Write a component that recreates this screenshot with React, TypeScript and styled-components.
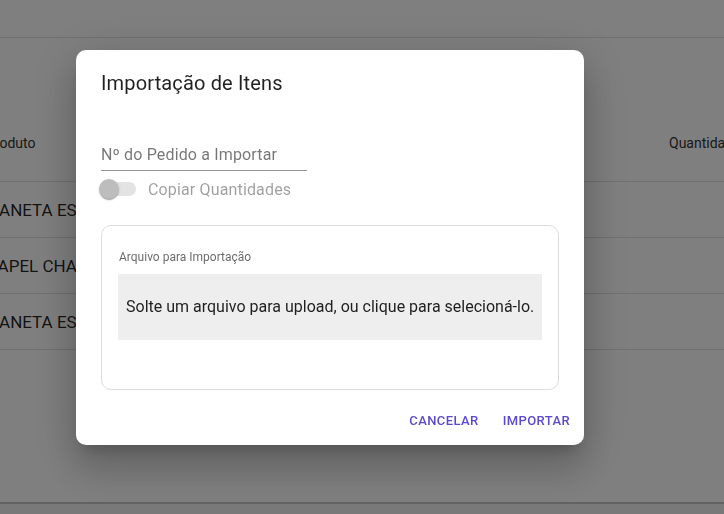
import * as React from 'react'
import styled, { createGlobalStyle } from 'styled-components'

const GlobalStyle = createGlobalStyle`
  html, body {
    margin: 0;
    padding: 0;
    width: 724px;
    height: 514px;
    overflow: hidden;
    background: #fff;
    font-family: Roboto, "Liberation Sans", Arial, sans-serif;
  }
`

const Page = styled.div`
  display: flex;
  flex-direction: column;
  width: 724px;
  height: 514px;
  background: #fff;
  overflow: hidden;
`
const TopBar = styled.div`
  height: 37px;
  flex-shrink: 0;
  border-bottom: 1px solid #e0e0e0;
`
const Table = styled.div`
  display: flex;
  flex-direction: column;
  margin-left: -14px;
  flex: 1;
`
const HeaderRow = styled.div`
  display: flex;
  align-items: flex-end;
  height: 144px;
  padding-bottom: 30px;
  box-sizing: border-box;
  border-bottom: 1px solid #e0e0e0;
  font-size: 14px;
  color: #333;
`
const BodyRow = styled.div`
  display: flex;
  align-items: center;
  height: 56px;
  box-sizing: border-box;
  border-bottom: 1px solid #e0e0e0;
  padding-left: 2px;
  font-size: 17px;
  color: rgba(0, 0, 0, 0.87);
`
const Cell = styled.div<{ $width?: number }>`
  width: ${p => (p.$width ? `${p.$width}px` : 'auto')};
  white-space: nowrap;
  flex-shrink: 0;
`
const Footer = styled.div`
  height: 10px;
  flex-shrink: 0;
  border-top: 2px solid #c4c4c4;
  background: #f2f2f2;
`

const Overlay = styled.div`
  position: fixed;
  inset: 0;
  background: rgba(0, 0, 0, 0.5);
  display: flex;
  align-items: flex-start;
  justify-content: flex-start;
  padding: 50px 0 0 76px;
`
const Dialog = styled.div`
  width: 508px;
  background: #fff;
  border-radius: 10px;
  box-shadow: 0px 11px 15px -7px rgba(0, 0, 0, 0.2), 0px 24px 38px 3px rgba(0, 0, 0, 0.14),
    0px 9px 46px 8px rgba(0, 0, 0, 0.12);
  display: flex;
  flex-direction: column;
`
const Title = styled.h2`
  margin: 0;
  padding: 17px 24px 15px 25px;
  font-size: 20px;
  font-weight: 400;
  line-height: 32px;
  letter-spacing: 0.15px;
  color: rgba(0, 0, 0, 0.87);
`
const Content = styled.div`
  padding: 9px 24px 0 24px;
  display: flex;
  flex-direction: column;
`
const Field = styled.label`
  display: flex;
  align-items: flex-end;
  width: 206px;
  height: 48px;
  margin-left: 1px;
  padding-bottom: 4px;
  box-sizing: border-box;
  border-bottom: 1px solid rgba(0, 0, 0, 0.42);
  font-size: 16px;
  letter-spacing: 0.15px;
  color: rgba(0, 0, 0, 0.54);
  line-height: 23px;
`
const SwitchRow = styled.div`
  display: flex;
  align-items: center;
  height: 38px;
  margin-left: -10px;
  margin-top: -1px;
  font-size: 16px;
  letter-spacing: 0.15px;
  color: rgba(0, 0, 0, 0.38);
`
const SwitchRoot = styled.span`
  position: relative;
  width: 58px;
  height: 38px;
  padding: 12px;
  box-sizing: border-box;
  display: inline-flex;
  flex-shrink: 0;
`
const Track = styled.span`
  width: 100%;
  height: 100%;
  border-radius: 7px;
  background: #e3e3e3;
`
const Thumb = styled.span`
  position: absolute;
  top: 9px;
  left: 9px;
  width: 20px;
  height: 20px;
  border-radius: 50%;
  background: #bdbdbd;
  box-shadow: 0px 2px 1px -1px rgba(0, 0, 0, 0.2), 0px 1px 1px 0px rgba(0, 0, 0, 0.14),
    0px 1px 3px 0px rgba(0, 0, 0, 0.12);
`
const DropBox = styled.div`
  margin-top: 17px;
  margin-left: 1px;
  width: 458px;
  border: 1px solid #dcdcdc;
  border-radius: 10px;
  box-sizing: border-box;
  padding: 24px 16px 49px 16px;
  display: flex;
  flex-direction: column;
`
const DropLabel = styled.div`
  font-size: 12px;
  line-height: 14px;
  color: rgba(0, 0, 0, 0.6);
  margin-bottom: 10px;
  padding-left: 1px;
`
const DropArea = styled.div`
  height: 66px;
  background: #eeeeee;
  display: flex;
  align-items: center;
  padding-left: 8px;
  padding-bottom: 2px;
  box-sizing: border-box;
  font-size: 16px;
  color: rgba(0, 0, 0, 0.87);
  cursor: pointer;
`
const Actions = styled.div`
  display: flex;
  justify-content: flex-end;
  align-items: center;
  gap: 8px;
  padding: 12px 6px 7px 8px;
`
const Button = styled.button`
  height: 36px;
  min-width: 64px;
  padding: 0 8px;
  border: none;
  background: transparent;
  border-radius: 4px;
  font-family: Roboto, "Liberation Sans", Arial, sans-serif;
  font-size: 13px;
  font-weight: 500;
  letter-spacing: 0.4px;
  text-transform: uppercase;
  color: #5b4acb;
  cursor: pointer;
`

const rows = ['CANETA ESFEROGRÁFICA AZUL', 'PAPEL CHAMEX A4', 'CANETA ESFEROGRÁFICA PRETA']

export default function App() {
  return (
    <>
      <GlobalStyle />
      <Page>
        <TopBar />
        <Table>
          <HeaderRow>
            <Cell $width={683}>Produto</Cell>
            <Cell>Quantidade</Cell>
          </HeaderRow>
          {rows.map((r, i) => (
            <BodyRow key={i}>
              <Cell>{r}</Cell>
            </BodyRow>
          ))}
        </Table>
        <Footer />
      </Page>
      <Overlay>
        <Dialog>
          <Title>Importação de Itens</Title>
          <Content>
            <Field>Nº do Pedido a Importar</Field>
            <SwitchRow>
              <SwitchRoot>
                <Track />
                <Thumb />
              </SwitchRoot>
              Copiar Quantidades
            </SwitchRow>
            <DropBox>
              <DropLabel>Arquivo para Importação</DropLabel>
              <DropArea>Solte um arquivo para upload, ou clique para selecioná-lo.</DropArea>
            </DropBox>
          </Content>
          <Actions>
            <Button>Cancelar</Button>
            <Button>Importar</Button>
          </Actions>
        </Dialog>
      </Overlay>
    </>
  )
}
